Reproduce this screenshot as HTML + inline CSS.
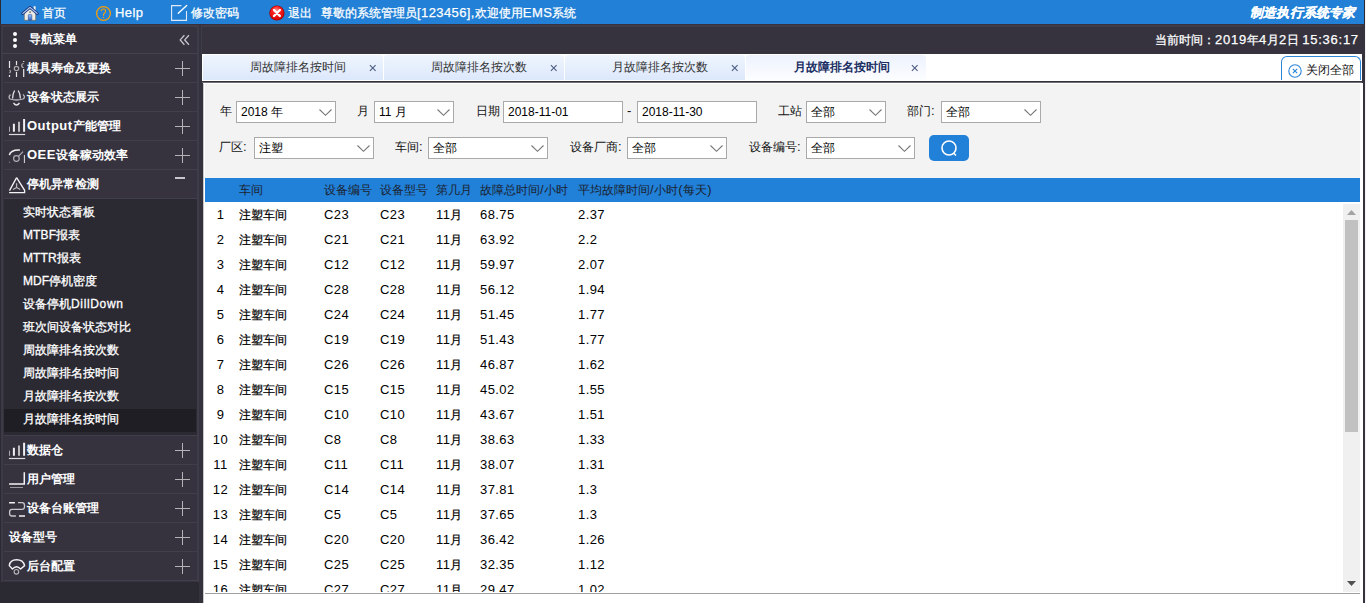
<!DOCTYPE html>
<html><head><meta charset="utf-8">
<style>
*{margin:0;padding:0;box-sizing:border-box}
html,body{width:1366px;height:603px;overflow:hidden;background:#36333f;font-family:"Liberation Sans",sans-serif;font-size:12px;color:#222}
.L{font-size:13px}
.a{position:absolute}
svg{position:absolute;overflow:visible}
#top{position:absolute;left:0;top:0;width:1365px;height:24px;background:#2281d6;border-left:1px solid #2a2a33;border-right:1px solid #2a2a33}
.tt .L{letter-spacing:.4px}
.tm .L{letter-spacing:.75px}
.tt{position:absolute;color:#fff;-webkit-text-stroke:.25px #fff;font-size:12px;top:4px;line-height:18px;white-space:nowrap}
/* sidebar */
#side{position:absolute;left:0;top:24px;width:203px;height:579px;background:#36333f;border-left:1px solid #2a2932}
.row{position:absolute;left:2px;width:196px;height:29px;border:1px solid #403d4a;border-top:none;color:#fff;font-weight:bold;font-size:12px;line-height:28px;white-space:nowrap}
.row .t{position:absolute;left:25px;top:0}
.plus{position:absolute;left:173px;top:7px;width:15px;height:15px}
.plus:before{content:"";position:absolute;left:7px;top:0;width:1px;height:15px;background:#b9b9bd}
.plus:after{content:"";position:absolute;left:0;top:7px;width:15px;height:1px;background:#b9b9bd}
.sub .L{font-size:12px;letter-spacing:.1px}
.dd .L{letter-spacing:.65px}
.sub{position:absolute;left:4px;width:192px;height:23px;color:#fff;font-size:12px;-webkit-text-stroke:.3px #fff;line-height:21px;white-space:nowrap}
.sub>span{position:absolute;left:19px;top:0}
.st{position:absolute;color:#fff;font-weight:bold;font-size:12px;line-height:16px;white-space:nowrap}
.st .L{letter-spacing:.5px}
/* main */
.lbl{position:absolute;font-size:12px;color:#111;line-height:16px;white-space:nowrap}
.sel{position:absolute;height:22px;background:#fff;border:1px solid #a9a9a9}
.sel>span{position:absolute;left:4px;top:2px;font-size:12px;line-height:16px;color:#000;white-space:nowrap}
.sel svg{right:3px;top:7px}
.sel .L{font-size:12px}
.row .L{letter-spacing:.5px}
.c .L{letter-spacing:.4px;-webkit-text-stroke:0}
.h .L{letter-spacing:.6px}
.tab{position:absolute;top:54px;height:26px;border-top:1px solid #fff;border-left:1px solid #fff;border-radius:4px 4px 0 0;background:linear-gradient(#eff5fe,#dce8fb)}
.tab>span{position:absolute;top:4px;font-size:12px;line-height:16px;color:#333;white-space:nowrap}
.tab>b{position:absolute;top:3px;font-weight:normal;font-size:14px;line-height:16px;color:#556}
.c{position:absolute;font-size:12px;line-height:16px;color:#000;-webkit-text-stroke:.2px #000;white-space:nowrap}
.h{position:absolute;top:182px;font-size:12px;line-height:16px;color:#1b1f2e;white-space:nowrap}
</style></head><body>
<div id="top">
  <svg style="left:0;top:0" width="300" height="24">
    <defs>
      <radialGradient id="rg" cx="0.45" cy="0.3" r="0.75"><stop offset="0" stop-color="#ff9a9a"/><stop offset="0.35" stop-color="#f22"/><stop offset="1" stop-color="#c00"/></radialGradient>
      <linearGradient id="door" x1="0" y1="0" x2="0" y2="1"><stop offset="0" stop-color="#9cc8ff"/><stop offset="1" stop-color="#2a62c8"/></linearGradient>
    </defs>
    <rect x="32.6" y="6.2" width="2" height="4" fill="#f0f0f0"/>
    <path d="M23.3 13 L29 8.8 L34.7 13 V20.3 H23.3 Z" fill="#ecebe6" stroke="#6d6a62" stroke-width="0.7"/>
    <rect x="28.3" y="11.3" width="1.6" height="1.6" fill="#777"/>
    <rect x="27.3" y="14.5" width="3.5" height="5.8" rx="0.8" fill="url(#door)" stroke="#1c3d8a" stroke-width="0.5"/>
    <path d="M21.6 13.6 L29 7.3 L36.4 13.6" fill="none" stroke="#1e3a86" stroke-width="2.8" stroke-linejoin="round" stroke-linecap="round"/>
    <path d="M21.9 13.4 L29 7.4 L36.1 13.4" fill="none" stroke="#b9d3f7" stroke-width="1.1" stroke-linejoin="round" stroke-linecap="round"/>
    <circle cx="102.5" cy="13.5" r="6.9" fill="none" stroke="#f5a00a" stroke-width="1.3"/>
    <path d="M100.3 10.6 Q100.5 9 102.5 9 Q104.6 9 104.6 11 Q104.6 12.3 103.3 13.2 Q102.5 13.8 102.5 15.3" fill="none" stroke="#f5a00a" stroke-width="1.2" stroke-linecap="round"/>
    <circle cx="102.5" cy="17.6" r="0.75" fill="#f5a00a"/>
    <path d="M180.4 5.6 H170.6 V20.4 H185.5 V11.1" fill="none" stroke="#dfeaf7" stroke-width="1.1"/>
    <path d="M177.3 13.3 L185.7 5.6" stroke="#fff" stroke-width="1.4" stroke-linecap="round"/>
    <circle cx="275.9" cy="13" r="7.6" fill="#8a0000"/>
    <circle cx="275.9" cy="13" r="7" fill="url(#rg)"/>
    <path d="M273 10 L278.9 16 M278.9 10 L273 16" stroke="#fff" stroke-width="2.4" stroke-linecap="round"/>
  </svg>
  <span class="tt" style="left:41px">首页</span>
  <span class="tt" style="left:114px"><span class="L">Help</span></span>
  <span class="tt" style="left:190px">修改密码</span>
  <span class="tt" style="left:287px">退出</span>
  <span class="tt" style="left:320px">尊敬的系统管理员<span class="L">[123456],</span>欢迎使用<span class="L">EMS</span>系统</span>
  <span class="tt" style="left:1249px;font-size:13px;font-style:italic;font-weight:bold;letter-spacing:.2px;-webkit-text-stroke:.15px #fff">制造执行系统专家</span>
</div>

<div class="a" style="left:0;top:24px;width:203px;height:579px;background:#36333f"></div>
<div class="a" style="left:0;top:24px;width:1px;height:579px;background:#2b2a33"></div>
<div class="a" style="left:1px;top:24px;width:2px;height:579px;background:#3d3a47"></div>
<div class="a" style="left:197px;top:24px;width:2px;height:579px;background:#3f3c49"></div>
<div class="a" style="left:199px;top:24px;width:4px;height:579px;background:#34323c"></div>
<div class="a" style="left:1px;top:25px;width:196px;height:2px;background:#3d3a47"></div>
<div class="a" style="left:1px;top:53px;width:196px;height:1px;background:#45424f"></div>
<span class="st" style="left:29px;top:31px">导航菜单</span>
<i class="a" style="left:13px;top:32px;width:4px;height:4px;border-radius:2px;background:#fff"></i>
<i class="a" style="left:13px;top:38px;width:4px;height:4px;border-radius:2px;background:#fff"></i>
<i class="a" style="left:13px;top:44px;width:4px;height:4px;border-radius:2px;background:#fff"></i>
<svg style="left:0;top:0" width="203" height="603"><path d="M184.4 35.2 L180.2 39.9 L184.4 44.7 M188.9 35.2 L184.7 39.9 L188.9 44.7" fill="none" stroke="#c8c8cc" stroke-width="1.3"/></svg>
<div class="a" style="left:4px;top:82px;width:193px;height:1px;background:#423f4c"></div>
<span class="st" style="left:27px;top:60px">模具寿命及更换</span>
<i class="a" style="left:175px;top:68px;width:15px;height:1px;background:#b4b4b8"></i>
<i class="a" style="left:182px;top:61px;width:1px;height:15px;background:#b4b4b8"></i>
<div class="a" style="left:4px;top:111px;width:193px;height:1px;background:#423f4c"></div>
<span class="st" style="left:27px;top:89px">设备状态展示</span>
<i class="a" style="left:175px;top:97px;width:15px;height:1px;background:#b4b4b8"></i>
<i class="a" style="left:182px;top:90px;width:1px;height:15px;background:#b4b4b8"></i>
<div class="a" style="left:4px;top:140px;width:193px;height:1px;background:#423f4c"></div>
<span class="st" style="left:27px;top:118px"><span class="L">Output</span>产能管理</span>
<i class="a" style="left:175px;top:126px;width:15px;height:1px;background:#b4b4b8"></i>
<i class="a" style="left:182px;top:119px;width:1px;height:15px;background:#b4b4b8"></i>
<div class="a" style="left:4px;top:169px;width:193px;height:1px;background:#423f4c"></div>
<span class="st" style="left:27px;top:147px"><span class="L">OEE</span>设备稼动效率</span>
<i class="a" style="left:175px;top:155px;width:15px;height:1px;background:#b4b4b8"></i>
<i class="a" style="left:182px;top:148px;width:1px;height:15px;background:#b4b4b8"></i>
<div class="a" style="left:4px;top:198px;width:193px;height:1px;background:#423f4c"></div>
<span class="st" style="left:27px;top:176px">停机异常检测</span>
<i class="a" style="left:175px;top:177px;width:10px;height:2px;background:#c8c8cc"></i>
<div class="a" style="left:4px;top:199px;width:193px;height:236px;background:#2b2a33"></div>
<div class="sub" style="top:202px"><span>实时状态看板</span></div>
<div class="sub" style="top:225px"><span><span class="L">MTBF</span>报表</span></div>
<div class="sub" style="top:248px"><span><span class="L">MTTR</span>报表</span></div>
<div class="sub" style="top:271px"><span><span class="L">MDF</span>停机密度</span></div>
<div class="sub" style="top:294px"><span class="dd">设备停机<span class="L">DillDown</span></span></div>
<div class="sub" style="top:317px"><span>班次间设备状态对比</span></div>
<div class="sub" style="top:340px"><span>周故障排名按次数</span></div>
<div class="sub" style="top:363px"><span>周故障排名按时间</span></div>
<div class="sub" style="top:386px"><span>月故障排名按次数</span></div>
<div class="sub" style="top:409px;background:#1f1e25"><span>月故障排名按时间</span></div>
<div class="a" style="left:4px;top:464px;width:193px;height:1px;background:#423f4c"></div>
<span class="st" style="left:27px;top:442px">数据仓</span>
<i class="a" style="left:175px;top:450px;width:15px;height:1px;background:#b4b4b8"></i>
<i class="a" style="left:182px;top:443px;width:1px;height:15px;background:#b4b4b8"></i>
<div class="a" style="left:4px;top:493px;width:193px;height:1px;background:#423f4c"></div>
<span class="st" style="left:27px;top:471px">用户管理</span>
<i class="a" style="left:175px;top:479px;width:15px;height:1px;background:#b4b4b8"></i>
<i class="a" style="left:182px;top:472px;width:1px;height:15px;background:#b4b4b8"></i>
<div class="a" style="left:4px;top:522px;width:193px;height:1px;background:#423f4c"></div>
<span class="st" style="left:27px;top:500px">设备台账管理</span>
<i class="a" style="left:175px;top:508px;width:15px;height:1px;background:#b4b4b8"></i>
<i class="a" style="left:182px;top:501px;width:1px;height:15px;background:#b4b4b8"></i>
<div class="a" style="left:4px;top:551px;width:193px;height:1px;background:#423f4c"></div>
<span class="st" style="left:9px;top:529px">设备型号</span>
<i class="a" style="left:175px;top:537px;width:15px;height:1px;background:#b4b4b8"></i>
<i class="a" style="left:182px;top:530px;width:1px;height:15px;background:#b4b4b8"></i>
<div class="a" style="left:4px;top:580px;width:193px;height:1px;background:#423f4c"></div>
<span class="st" style="left:27px;top:558px">后台配置</span>
<i class="a" style="left:175px;top:566px;width:15px;height:1px;background:#b4b4b8"></i>
<i class="a" style="left:182px;top:559px;width:1px;height:15px;background:#b4b4b8"></i>
<div class="a" style="left:4px;top:435px;width:193px;height:1px;background:#423f4c"></div>
<div class="a" style="left:1px;top:582px;width:198px;height:21px;background:#2b2a33"></div>
<svg style="left:0;top:0" width="203" height="603" fill="none">
<g stroke="#e6e6e8" stroke-width="1.2">
<path d="M9.5 61v7M16.5 61v4M16.5 72v5M23.7 69v8M23.7 61v1"/>
<path d="M9.5 75v2"/>
</g>
<g stroke="#aaa" stroke-width="1.2"><path d="M9.5 70 Q11.5 71.5 9.5 73"/><circle cx="16.5" cy="68.5" r="2.2"/><path d="M23.7 63.5 A2 2 0 1 0 23.7 67.5"/></g>
<g stroke="#e6e6e8" stroke-width="1.3"><path d="M14.6 90.5 Q12.5 94 12.6 98.5M18.2 90.5 Q20.4 94 20.4 98.5M13.5 103 Q16.5 107 19.5 103"/></g>
<g stroke="#b8b8bc" stroke-width="1.3"><path d="M10.5 94.5 Q8 97 10 99 Q16.5 101 23 99 Q26 97 23 94.5"/></g>
<g stroke="#a8a8ac" stroke-width="1"><path d="M9.5 126.6v5.2"/></g>
<g stroke="#f0f0f2" stroke-width="2"><path d="M13.9 123.8v8M24.1 118.9v12.9"/></g>
<g stroke="#bdbdc0" stroke-width="2"><path d="M19 121.7v10.1"/></g>
<path d="M8.9 134.5H25.2" stroke="#dcdcde" stroke-width="1.2"/>
<path d="M9.4 155.2 Q10.5 149.6 19.9 150" stroke="#f0f0f2" stroke-width="1.6"/>
<circle cx="16.4" cy="158.5" r="2.8" stroke="#b0b0b4" stroke-width="1.2"/>
<path d="M18.5 156.3 L23 151.7" stroke="#b0b0b4" stroke-width="1.2"/>
<path d="M24.4 155v8" stroke="#e0e0e2" stroke-width="1"/>
<circle cx="9.5" cy="162.2" r="0.6" fill="#888"/>
<path d="M16.6 177.6 L24.6 190.3 V192.6 H9.1 M9.5 190.6 L16.6 177.6" stroke="#f4f4f6" stroke-width="1.3" stroke-linejoin="miter"/>
<path d="M16.6 183.2v4.3M16.6 187.5 L13 189.5M16.6 187.5 L20.2 189.5" stroke="#b8b8bc" stroke-width="1.3"/>
<g stroke="#a8a8ac" stroke-width="1"><path d="M9.5 450.7v5.1"/></g>
<g stroke="#f0f0f2" stroke-width="2"><path d="M13.9 447.8v8M24.1 442.8v13"/></g>
<g stroke="#bdbdc0" stroke-width="2"><path d="M19 445.6v10.2"/></g>
<path d="M8.9 458.5H25.2" stroke="#dcdcde" stroke-width="1.2"/>
<path d="M9.1 484 H24.3 V472.2" stroke="#f4f4f6" stroke-width="1.5"/>
<path d="M10 487.5H23" stroke="#9a9a9e" stroke-width="1"/>
<path d="M9.1 502.7H14.9M19 516H25" stroke="#f4f4f6" stroke-width="1.5"/>
<path d="M18 502.7H22 Q24.5 502.7 24.5 505.5 V507 Q24.5 509.4 22 509.4 H12 Q9.6 509.4 9.6 512 V513.5 Q9.6 516 12 516 H15.9" stroke="#c8c8cc" stroke-width="1.3"/>
<path d="M9.3 565.6 Q10 559.7 16.6 559.7 Q23.2 559.7 24.6 565.6 L20.6 569 Q18.5 566.7 16.6 566.7 Q14.5 566.7 12.4 569 Z" stroke="#f4f4f6" stroke-width="1.4" stroke-linejoin="round"/>
<circle cx="16.4" cy="571.8" r="2.3" stroke="#b0b0b4" stroke-width="1.2"/>
</svg>
<!-- main -->
<div class="a" style="left:201px;top:24px;width:1165px;height:30px;background:#36333f;border-left:1px solid #403d4a"></div>
<div class="a" style="left:0;top:24px;width:1366px;height:1px;background:#3a3039"></div>
<div class="a" style="left:1px;top:25px;width:197px;height:2px;background:#403d4a"></div>
<div class="a" style="left:201px;top:25px;width:1162px;height:2px;background:#403d4a"></div>
<span class="a tm" style="left:1155px;top:31px;color:#fff;-webkit-text-stroke:.25px #fff;font-size:12px;line-height:18px;white-space:nowrap">当前时间：<span class="L">2019</span>年<span class="L">4</span>月<span class="L">2</span>日 <span class="L">15:36:17</span></span>

<div class="a" style="left:202px;top:54px;width:1161px;height:27px;background:#fff"></div>
<div class="tab" style="left:202px;width:181px"><span style="left:47px">周故障排名按时间</span></div><svg style="left:369px;top:64px" width="8" height="8" viewBox="0 0 8 8"><path d="M0.9 1.2L6.6 6.8M6.6 1.2L0.9 6.8" stroke="#4f5f82" stroke-width="1.15"/></svg>
<div class="tab" style="left:383px;width:181px"><span style="left:47px">周故障排名按次数</span></div><svg style="left:550px;top:64px" width="8" height="8" viewBox="0 0 8 8"><path d="M0.9 1.2L6.6 6.8M6.6 1.2L0.9 6.8" stroke="#4f5f82" stroke-width="1.15"/></svg>
<div class="tab" style="left:564px;width:181px"><span style="left:47px">月故障排名按次数</span></div><svg style="left:731px;top:64px" width="8" height="8" viewBox="0 0 8 8"><path d="M0.9 1.2L6.6 6.8M6.6 1.2L0.9 6.8" stroke="#4f5f82" stroke-width="1.15"/></svg>
<div class="tab" style="left:745px;width:181px;background:linear-gradient(#edf2fd,#fcfdff)"><span style="left:48px;font-weight:bold;color:#1b2f63">月故障排名按时间</span></div><svg style="left:911px;top:64px" width="8" height="8" viewBox="0 0 8 8"><path d="M0.9 1.2L6.6 6.8M6.6 1.2L0.9 6.8" stroke="#4f5f82" stroke-width="1.15"/></svg>
<div class="a" style="left:1281px;top:56px;width:80px;height:24px;border:1.5px solid #2b86d8;border-bottom:none;border-radius:6px 6px 0 0;background:#fff">
  <svg style="left:6px;top:7px" width="14" height="14" viewBox="0 0 14 14"><circle cx="7" cy="7" r="6.2" fill="none" stroke="#2b86d8" stroke-width="1.1"/><path d="M4.8 4.8L9.2 9.2M9.2 4.8L4.8 9.2" stroke="#2b86d8" stroke-width="1.1"/></svg>
  <span class="a" style="left:24px;top:5px;font-size:12px;line-height:16px;color:#111;white-space:nowrap">关闭全部</span>
</div>
<div class="a" style="left:202px;top:81px;width:1160px;height:1px;background:#34323d"></div>
<div class="a" style="left:202px;top:82px;width:1160px;height:1px;background:#6e6c75"></div>
<div class="a" style="left:1362px;top:24px;width:3px;height:579px;background:#36333f"></div>
<div class="a" style="left:1365px;top:0;width:1px;height:603px;background:#f4f4f4"></div>

<!-- panel -->
<div class="a" style="left:203px;top:83px;width:1160px;height:520px;background:#f3f3f3;border-left:1px solid #c8c8c8;border-top:1px solid #fff"></div>
<div class="a" style="left:204px;top:83px;width:1px;height:520px;background:#fff"></div>
<div class="a" style="left:1360px;top:83px;width:3px;height:520px;background:#fff"></div>

<span class="lbl" style="left:220px;top:103px">年</span>
<div class="sel" style="left:236px;top:101px;width:100px"><span><span class="L">2018</span> 年</span><svg style="right:3px;top:7px" width="13" height="7" viewBox="0 0 13 7"><path d="M0.5 0.5 L6.5 6.3 L12.5 0.5" fill="none" stroke="#777" stroke-width="1.15"/></svg></div>
<span class="lbl" style="left:357px;top:103px">月</span>
<div class="sel" style="left:374px;top:101px;width:80px"><span><span class="L">11</span> 月</span><svg style="right:3px;top:7px" width="13" height="7" viewBox="0 0 13 7"><path d="M0.5 0.5 L6.5 6.3 L12.5 0.5" fill="none" stroke="#777" stroke-width="1.15"/></svg></div>
<span class="lbl" style="left:476px;top:103px">日期</span>
<div class="sel" style="left:503px;top:101px;width:120px"><span><span class="L">2018-11-01</span></span></div>
<span class="lbl" style="left:627px;top:103px"><span class="L">-</span></span>
<div class="sel" style="left:637px;top:101px;width:120px"><span><span class="L">2018-11-30</span></span></div>
<span class="lbl" style="left:778px;top:103px">工站</span>
<div class="sel" style="left:806px;top:101px;width:80px"><span>全部</span><svg style="right:3px;top:7px" width="13" height="7" viewBox="0 0 13 7"><path d="M0.5 0.5 L6.5 6.3 L12.5 0.5" fill="none" stroke="#777" stroke-width="1.15"/></svg></div>
<span class="lbl" style="left:907px;top:103px">部门<span class="L">:</span></span>
<div class="sel" style="left:941px;top:101px;width:100px"><span>全部</span><svg style="right:3px;top:7px" width="13" height="7" viewBox="0 0 13 7"><path d="M0.5 0.5 L6.5 6.3 L12.5 0.5" fill="none" stroke="#777" stroke-width="1.15"/></svg></div>

<span class="lbl" style="left:219px;top:139px">厂区<span class="L">:</span></span>
<div class="sel" style="left:254px;top:137px;width:120px"><span>注塑</span><svg style="right:3px;top:7px" width="13" height="7" viewBox="0 0 13 7"><path d="M0.5 0.5 L6.5 6.3 L12.5 0.5" fill="none" stroke="#777" stroke-width="1.15"/></svg></div>
<span class="lbl" style="left:395px;top:139px">车间<span class="L">:</span></span>
<div class="sel" style="left:428px;top:137px;width:120px"><span>全部</span><svg style="right:3px;top:7px" width="13" height="7" viewBox="0 0 13 7"><path d="M0.5 0.5 L6.5 6.3 L12.5 0.5" fill="none" stroke="#777" stroke-width="1.15"/></svg></div>
<span class="lbl" style="left:570px;top:139px">设备厂商<span class="L">:</span></span>
<div class="sel" style="left:627px;top:137px;width:100px"><span>全部</span><svg style="right:3px;top:7px" width="13" height="7" viewBox="0 0 13 7"><path d="M0.5 0.5 L6.5 6.3 L12.5 0.5" fill="none" stroke="#777" stroke-width="1.15"/></svg></div>
<span class="lbl" style="left:749px;top:139px">设备编号<span class="L">:</span></span>
<div class="sel" style="left:806px;top:137px;width:109px"><span>全部</span><svg style="right:3px;top:7px" width="13" height="7" viewBox="0 0 13 7"><path d="M0.5 0.5 L6.5 6.3 L12.5 0.5" fill="none" stroke="#777" stroke-width="1.15"/></svg></div>
<div class="a" style="left:929px;top:135px;width:40px;height:26px;background:#2180d8;border-radius:5px">
  <svg style="left:12px;top:5px" width="17" height="17" viewBox="0 0 17 17"><circle cx="8" cy="8" r="7" fill="none" stroke="#fff" stroke-width="1.6"/><path d="M12.5 13 L15 15.5" stroke="#fff" stroke-width="1.6"/></svg>
</div>

<!-- grid -->
<div class="a" style="left:205px;top:178px;width:1155px;height:415px;background:#fff"></div>
<div class="a" style="left:205px;top:178px;width:1155px;height:24px;background:#2180d8"></div>
<span class="h" style="left:239px">车间</span>
<span class="h" style="left:324px">设备编号</span>
<span class="h" style="left:380px">设备型号</span>
<span class="h" style="left:436px">第几月</span>
<span class="h" style="left:480px">故障总时间<span class="L">/</span>小时</span>
<span class="h" style="left:578px">平均故障时间<span class="L">/</span>小时<span class="L">(</span>每天<span class="L">)</span></span>
<div class="a" style="left:205px;top:202px;width:1155px;height:390px;overflow:hidden">
<div class="a" style="left:-205px;top:-202px;width:1366px;height:603px">
<span class="c" style="left:205px;width:31px;text-align:center;top:207px"><span class="L">1</span></span>
<span class="c" style="left:239px;top:207px">注塑车间</span>
<span class="c" style="left:324px;top:207px"><span class="L">C23</span></span>
<span class="c" style="left:380px;top:207px"><span class="L">C23</span></span>
<span class="c" style="left:436px;top:207px"><span class="L">11</span>月</span>
<span class="c" style="left:480px;top:207px"><span class="L">68.75</span></span>
<span class="c" style="left:578px;top:207px"><span class="L">2.37</span></span>
<span class="c" style="left:205px;width:31px;text-align:center;top:232px"><span class="L">2</span></span>
<span class="c" style="left:239px;top:232px">注塑车间</span>
<span class="c" style="left:324px;top:232px"><span class="L">C21</span></span>
<span class="c" style="left:380px;top:232px"><span class="L">C21</span></span>
<span class="c" style="left:436px;top:232px"><span class="L">11</span>月</span>
<span class="c" style="left:480px;top:232px"><span class="L">63.92</span></span>
<span class="c" style="left:578px;top:232px"><span class="L">2.2</span></span>
<span class="c" style="left:205px;width:31px;text-align:center;top:257px"><span class="L">3</span></span>
<span class="c" style="left:239px;top:257px">注塑车间</span>
<span class="c" style="left:324px;top:257px"><span class="L">C12</span></span>
<span class="c" style="left:380px;top:257px"><span class="L">C12</span></span>
<span class="c" style="left:436px;top:257px"><span class="L">11</span>月</span>
<span class="c" style="left:480px;top:257px"><span class="L">59.97</span></span>
<span class="c" style="left:578px;top:257px"><span class="L">2.07</span></span>
<span class="c" style="left:205px;width:31px;text-align:center;top:282px"><span class="L">4</span></span>
<span class="c" style="left:239px;top:282px">注塑车间</span>
<span class="c" style="left:324px;top:282px"><span class="L">C28</span></span>
<span class="c" style="left:380px;top:282px"><span class="L">C28</span></span>
<span class="c" style="left:436px;top:282px"><span class="L">11</span>月</span>
<span class="c" style="left:480px;top:282px"><span class="L">56.12</span></span>
<span class="c" style="left:578px;top:282px"><span class="L">1.94</span></span>
<span class="c" style="left:205px;width:31px;text-align:center;top:307px"><span class="L">5</span></span>
<span class="c" style="left:239px;top:307px">注塑车间</span>
<span class="c" style="left:324px;top:307px"><span class="L">C24</span></span>
<span class="c" style="left:380px;top:307px"><span class="L">C24</span></span>
<span class="c" style="left:436px;top:307px"><span class="L">11</span>月</span>
<span class="c" style="left:480px;top:307px"><span class="L">51.45</span></span>
<span class="c" style="left:578px;top:307px"><span class="L">1.77</span></span>
<span class="c" style="left:205px;width:31px;text-align:center;top:332px"><span class="L">6</span></span>
<span class="c" style="left:239px;top:332px">注塑车间</span>
<span class="c" style="left:324px;top:332px"><span class="L">C19</span></span>
<span class="c" style="left:380px;top:332px"><span class="L">C19</span></span>
<span class="c" style="left:436px;top:332px"><span class="L">11</span>月</span>
<span class="c" style="left:480px;top:332px"><span class="L">51.43</span></span>
<span class="c" style="left:578px;top:332px"><span class="L">1.77</span></span>
<span class="c" style="left:205px;width:31px;text-align:center;top:357px"><span class="L">7</span></span>
<span class="c" style="left:239px;top:357px">注塑车间</span>
<span class="c" style="left:324px;top:357px"><span class="L">C26</span></span>
<span class="c" style="left:380px;top:357px"><span class="L">C26</span></span>
<span class="c" style="left:436px;top:357px"><span class="L">11</span>月</span>
<span class="c" style="left:480px;top:357px"><span class="L">46.87</span></span>
<span class="c" style="left:578px;top:357px"><span class="L">1.62</span></span>
<span class="c" style="left:205px;width:31px;text-align:center;top:382px"><span class="L">8</span></span>
<span class="c" style="left:239px;top:382px">注塑车间</span>
<span class="c" style="left:324px;top:382px"><span class="L">C15</span></span>
<span class="c" style="left:380px;top:382px"><span class="L">C15</span></span>
<span class="c" style="left:436px;top:382px"><span class="L">11</span>月</span>
<span class="c" style="left:480px;top:382px"><span class="L">45.02</span></span>
<span class="c" style="left:578px;top:382px"><span class="L">1.55</span></span>
<span class="c" style="left:205px;width:31px;text-align:center;top:407px"><span class="L">9</span></span>
<span class="c" style="left:239px;top:407px">注塑车间</span>
<span class="c" style="left:324px;top:407px"><span class="L">C10</span></span>
<span class="c" style="left:380px;top:407px"><span class="L">C10</span></span>
<span class="c" style="left:436px;top:407px"><span class="L">11</span>月</span>
<span class="c" style="left:480px;top:407px"><span class="L">43.67</span></span>
<span class="c" style="left:578px;top:407px"><span class="L">1.51</span></span>
<span class="c" style="left:205px;width:31px;text-align:center;top:432px"><span class="L">10</span></span>
<span class="c" style="left:239px;top:432px">注塑车间</span>
<span class="c" style="left:324px;top:432px"><span class="L">C8</span></span>
<span class="c" style="left:380px;top:432px"><span class="L">C8</span></span>
<span class="c" style="left:436px;top:432px"><span class="L">11</span>月</span>
<span class="c" style="left:480px;top:432px"><span class="L">38.63</span></span>
<span class="c" style="left:578px;top:432px"><span class="L">1.33</span></span>
<span class="c" style="left:205px;width:31px;text-align:center;top:457px"><span class="L">11</span></span>
<span class="c" style="left:239px;top:457px">注塑车间</span>
<span class="c" style="left:324px;top:457px"><span class="L">C11</span></span>
<span class="c" style="left:380px;top:457px"><span class="L">C11</span></span>
<span class="c" style="left:436px;top:457px"><span class="L">11</span>月</span>
<span class="c" style="left:480px;top:457px"><span class="L">38.07</span></span>
<span class="c" style="left:578px;top:457px"><span class="L">1.31</span></span>
<span class="c" style="left:205px;width:31px;text-align:center;top:482px"><span class="L">12</span></span>
<span class="c" style="left:239px;top:482px">注塑车间</span>
<span class="c" style="left:324px;top:482px"><span class="L">C14</span></span>
<span class="c" style="left:380px;top:482px"><span class="L">C14</span></span>
<span class="c" style="left:436px;top:482px"><span class="L">11</span>月</span>
<span class="c" style="left:480px;top:482px"><span class="L">37.81</span></span>
<span class="c" style="left:578px;top:482px"><span class="L">1.3</span></span>
<span class="c" style="left:205px;width:31px;text-align:center;top:507px"><span class="L">13</span></span>
<span class="c" style="left:239px;top:507px">注塑车间</span>
<span class="c" style="left:324px;top:507px"><span class="L">C5</span></span>
<span class="c" style="left:380px;top:507px"><span class="L">C5</span></span>
<span class="c" style="left:436px;top:507px"><span class="L">11</span>月</span>
<span class="c" style="left:480px;top:507px"><span class="L">37.65</span></span>
<span class="c" style="left:578px;top:507px"><span class="L">1.3</span></span>
<span class="c" style="left:205px;width:31px;text-align:center;top:532px"><span class="L">14</span></span>
<span class="c" style="left:239px;top:532px">注塑车间</span>
<span class="c" style="left:324px;top:532px"><span class="L">C20</span></span>
<span class="c" style="left:380px;top:532px"><span class="L">C20</span></span>
<span class="c" style="left:436px;top:532px"><span class="L">11</span>月</span>
<span class="c" style="left:480px;top:532px"><span class="L">36.42</span></span>
<span class="c" style="left:578px;top:532px"><span class="L">1.26</span></span>
<span class="c" style="left:205px;width:31px;text-align:center;top:557px"><span class="L">15</span></span>
<span class="c" style="left:239px;top:557px">注塑车间</span>
<span class="c" style="left:324px;top:557px"><span class="L">C25</span></span>
<span class="c" style="left:380px;top:557px"><span class="L">C25</span></span>
<span class="c" style="left:436px;top:557px"><span class="L">11</span>月</span>
<span class="c" style="left:480px;top:557px"><span class="L">32.35</span></span>
<span class="c" style="left:578px;top:557px"><span class="L">1.12</span></span>
<span class="c" style="left:205px;width:31px;text-align:center;top:582px"><span class="L">16</span></span>
<span class="c" style="left:239px;top:582px">注塑车间</span>
<span class="c" style="left:324px;top:582px"><span class="L">C27</span></span>
<span class="c" style="left:380px;top:582px"><span class="L">C27</span></span>
<span class="c" style="left:436px;top:582px"><span class="L">11</span>月</span>
<span class="c" style="left:480px;top:582px"><span class="L">29.47</span></span>
<span class="c" style="left:578px;top:582px"><span class="L">1.02</span></span>
</div>
</div>
<div class="a" style="left:1343px;top:204px;width:17px;height:388px;background:#f0f0f0"></div>
<div class="a" style="left:1345px;top:220px;width:13px;height:212px;background:#c1c1c1"></div>
<svg style="left:1347px;top:210px" width="9" height="5" viewBox="0 0 9 5"><path d="M0 5L4.5 0L9 5Z" fill="#a3a3a3"/></svg>
<svg style="left:1347px;top:581px" width="9" height="5" viewBox="0 0 9 5"><path d="M0 0L4.5 5L9 0Z" fill="#505050"/></svg>
<div class="a" style="left:205px;top:593px;width:1155px;height:1px;background:#a0a0a0"></div>
<div class="a" style="left:205px;top:594px;width:1155px;height:10px;background:#fff"></div>
</body></html>
